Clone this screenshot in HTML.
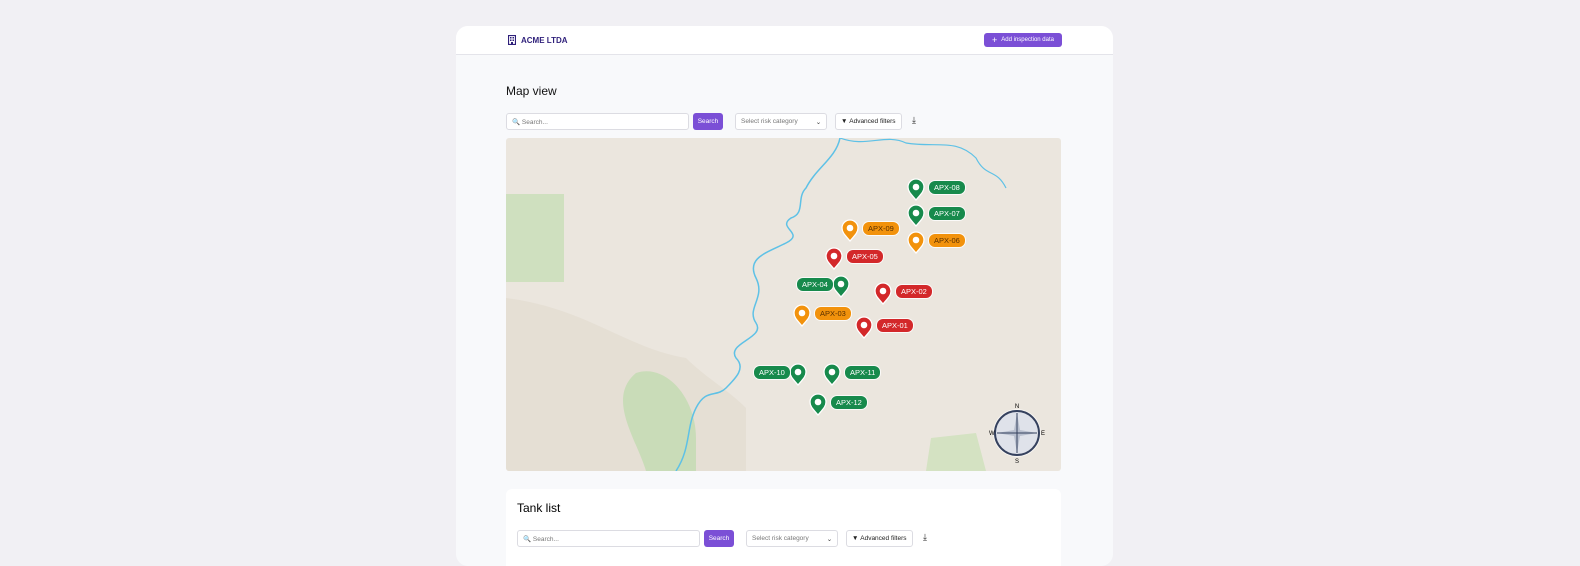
<!DOCTYPE html>
<html><head><meta charset="utf-8"><style>
*{box-sizing:border-box;margin:0;padding:0}
body{width:1580px;height:553px;background:#f1f0f4;font-family:"Liberation Sans",sans-serif;position:relative;overflow:hidden}
.card{position:absolute;left:456px;top:26px;width:657px;height:540px;background:#f8f9fb;border-radius:12px;overflow:hidden}
.hdr{height:29px;background:#fff;border-bottom:1px solid #e4e4ea;position:relative}
.logo{position:absolute;left:52px;top:9px;font-size:8px;font-weight:bold;color:#2e1f7a;display:flex;align-items:center;gap:5px}
.add{position:absolute;left:528px;top:7px;width:78px;height:14px;background:#7b4fd6;border-radius:3px;color:#fff;font-size:6px;display:flex;align-items:center;justify-content:center;gap:4px}
h1{position:absolute;font-size:12px;font-weight:normal;color:#111}
.in{position:absolute;height:17px;border:1px solid #dcdce2;border-radius:3px;background:#fff;font-size:6.5px;color:#777;display:flex;align-items:center;padding-left:5px}
.btn{position:absolute;height:17px;background:#7b4fd6;color:#fff;border-radius:3px;font-size:6.5px;display:flex;align-items:center;justify-content:center}
.map{position:absolute;left:50px;top:112px;width:555px;height:333px;background:#ebe6de;border-radius:3px;overflow:hidden}
.pin{position:absolute;width:18px;height:23px}
.lb{position:absolute;height:13px;border-radius:6px;color:#fff;font-size:7.5px;line-height:13px;padding:0 5px;box-shadow:0 0 0 1px rgba(255,255,255,.8)}
.g{background:#178a4c}.o{background:#f2920c;color:#5a3000}.r{background:#d3282a}
.tank{position:absolute;left:50px;top:463px;width:555px;height:100px;background:#fff;border-radius:6px}
</style></head><body>
<div class="card">
<div class="hdr">
<div class="logo"><svg width="8" height="10" viewBox="0 0 8 10"><rect x="0.5" y="0.5" width="7" height="9" fill="none" stroke="#2e1f7a" stroke-width="1.2"/><rect x="2" y="2" width="1.5" height="1.5" fill="#2e1f7a"/><rect x="4.5" y="2" width="1.5" height="1.5" fill="#2e1f7a"/><rect x="2" y="4.5" width="1.5" height="1.5" fill="#2e1f7a"/><rect x="4.5" y="4.5" width="1.5" height="1.5" fill="#2e1f7a"/><rect x="3" y="7" width="2" height="3" fill="#2e1f7a"/></svg>ACME LTDA</div>
<div class="add"><span style="font-size:9px">+</span>Add inspection data</div>
</div>
<h1 style="left:50px;top:58px">Map view</h1>
<div class="in" style="left:50px;top:87px;width:183px">&#128269;&nbsp;Search...</div>
<div class="btn" style="left:237px;top:87px;width:30px">Search</div>
<div class="in" style="left:279px;top:87px;width:92px">Select risk category<span style="margin-left:18px;color:#333">&#8964;</span></div>
<div class="in" style="left:379px;top:87px;width:67px;color:#222">&#9660;&nbsp;Advanced filters</div>
<div style="position:absolute;left:456px;top:89px;font-size:9px;color:#222">&#10515;</div>
<div class="map">
<svg width="555" height="333" style="position:absolute;left:0;top:0">
<path d="M0 160 C80 170 120 210 180 220 C200 240 220 250 240 270 L240 333 L0 333Z" fill="#e2dbd0" opacity=".7"/>
<rect x="0" y="56" width="58" height="88" fill="#cfe0bf"/>
<path d="M140 333 C130 300 100 260 130 235 C160 225 190 260 190 300 L190 333Z" fill="#c9dcb8"/>
<path d="M425 300 L470 295 L480 333 L420 333Z" fill="#d4e2c2"/>
<path d="M334 0 C330 20 310 30 300 50 C290 60 300 75 285 80 C270 90 300 95 280 105 C260 115 240 120 250 140 C260 160 240 170 250 185 C260 200 220 205 230 220 C240 230 230 240 220 250 C210 260 200 250 190 270 C180 290 185 310 170 333" stroke="#5ec1e6" stroke-width="1.5" fill="none"/>
<path d="M334 0 C360 10 380 -5 400 5 C430 10 450 0 470 20 C480 40 490 30 500 50" stroke="#5ec1e6" stroke-width="1.2" fill="none"/>
<g transform="translate(511,295)"><circle r="24" fill="#fff" opacity=".6"/><circle r="22" fill="#dfe2ea" stroke="#35415e" stroke-width="2"/><path d="M0 -20 L3 -3 L20 0 L3 3 L0 20 L-3 3 L-20 0 L-3 -3Z" fill="#b8bfce"/><path d="M0 -20 V20 M-20 0 H20" stroke="#35415e" stroke-width="1"/><text y="-25" font-size="6" text-anchor="middle">N</text><text y="30" font-size="6" text-anchor="middle">S</text><text x="-28" y="2" font-size="6">W</text><text x="24" y="2" font-size="6">E</text></g>
</svg>
</div>
<div class="tank"><div style="position:absolute;left:11px;top:12px;font-size:12px">Tank list</div>
<div class="in" style="left:11px;top:41px;width:183px">&#128269;&nbsp;Search...</div>
<div class="btn" style="left:198px;top:41px;width:30px">Search</div>
<div class="in" style="left:240px;top:41px;width:92px">Select risk category<span style="margin-left:18px;color:#333">&#8964;</span></div>
<div class="in" style="left:340px;top:41px;width:67px;color:#222">&#9660;&nbsp;Advanced filters</div>
<div style="position:absolute;left:417px;top:43px;font-size:9px;color:#222">&#10515;</div>
</div>
</div>
<div id="pins"></div>
<script>
var P=[["APX-08",916,187,"g",1],["APX-07",916,213,"g",1],["APX-06",916,240,"o",1],["APX-09",850,228,"o",1],["APX-05",834,256,"r",1],["APX-04",841,284,"g",0],["APX-02",883,291,"r",1],["APX-03",802,313,"o",1],["APX-01",864,325,"r",1],["APX-10",798,372,"g",0],["APX-11",832,372,"g",1],["APX-12",818,402,"g",1]];
var C={g:"#178a4c",o:"#f2920c",r:"#d3282a"},h="";
P.forEach(function(p){var x=p[1],y=p[2];
h+='<svg class="pin" style="left:'+(x-9)+'px;top:'+(y-9)+'px" viewBox="0 0 18 23"><path d="M9 22 C5 17 1 14 1 9 A8 8 0 0 1 17 9 C17 14 13 17 9 22Z" fill="'+C[p[3]]+'" stroke="#fff" stroke-width="1.3"/><circle cx="9" cy="9" r="3.3" fill="#fff"/></svg>';
var l=p[4]?x+13:x-44;h+='<div class="lb '+p[3]+'" style="left:'+l+'px;top:'+(y-6)+'px">'+p[0]+'</div>';});
document.getElementById("pins").innerHTML=h;
</script>
</body></html>
